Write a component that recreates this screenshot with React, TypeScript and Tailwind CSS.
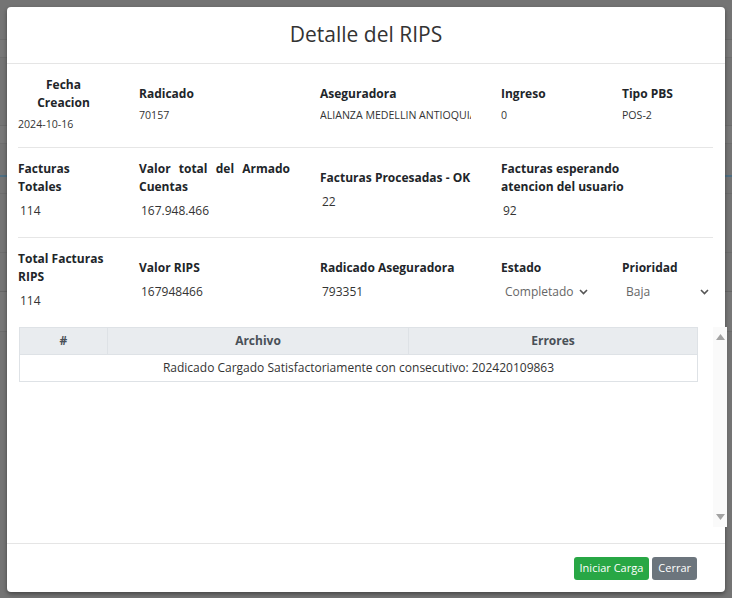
import React from "react"

const Chevron = () => (
  <svg width="9" height="6" viewBox="0 0 9 6" className="shrink-0">
    <polyline points="1,1 4.5,4.5 8,1" fill="none" stroke="#555" strokeWidth="1.6" />
  </svg>
)

const Field = ({ label, value, small, center, clip }: { label: string; value: string; small?: boolean; center?: boolean; clip?: boolean }) => (
  <div className="flex flex-col">
    <div className={`text-[12px] font-bold leading-[18px] text-[#212529] ${center ? "text-center" : ""}`}>{label}</div>
    {small ? (
      <div className={`mt-[4px] text-[10.6px] leading-[16px] text-[#333] ${clip ? "overflow-hidden whitespace-nowrap" : ""}`}>{value}</div>
    ) : (
      <div className="mt-[6px] pl-[2px] text-[12px] leading-[18px] text-[#333]">{value}</div>
    )}
  </div>
)

const SelectBox = ({ label, value }: { label: string; value: string }) => (
  <div className="flex flex-col">
    <div className="text-[12px] font-bold leading-[18px] text-[#212529]">{label}</div>
    <div className="mt-[6px] flex h-[18px] items-center justify-between px-[4px] text-[12px] leading-[18px] text-[#666]">
      <span>{value}</span>
      <Chevron />
    </div>
  </div>
)

export default function App() {
  return (
    <div className="relative h-[598px] w-[732px] overflow-hidden bg-[#747474]" style={{ fontFamily: '"Open Sans", "Liberation Sans", sans-serif' }}>
      {/* page beneath the backdrop */}
      <div className="flex flex-col">
        <div className="h-[40px] border-b border-[#6c6c6c]" />
        <div className="h-[18px] bg-[#787878] border-b border-[#6e6e6e]" />
        <div className="h-[68px] border-b border-[#6c6c6c]" />
        <div className="h-[18px] bg-[#787878] border-b border-[#6e6e6e]" />
        <div className="h-[33px] border-b-2 border-[#4f6f82]" />
        <div className="h-[17px] border-b border-[#6c6c6c]" />
        <div className="h-[59px] border-b border-[#6c6c6c]" />
        <div className="h-[39px] border-b border-[#666]" />
        <div className="h-[40px] bg-[#777] border-b border-[#6c6c6c]" />
      </div>

      {/* modal */}
      <div className="absolute left-[7px] top-[7px] flex h-[585px] w-[718px] flex-col rounded-[4px] bg-white shadow-[0_2px_4px_rgba(0,0,0,0.4)]">
        <div className="flex h-[57px] shrink-0 items-center justify-center border-b border-[#e5e5e5] pb-[1px]">
          <h1 className="text-[21px] font-normal leading-none text-[#333]">Detalle del RIPS</h1>
        </div>

        <div className="flex-1 pl-[11px]">
          <div className="grid w-[695px] grid-cols-[91px_151px_151px_91px_91px] items-center gap-x-[30px] border-b border-[#e6e6e6] pb-[15px] pt-[12px]">
            <div className="flex flex-col">
              <div className="w-[91px] text-center text-[12px] font-bold leading-[18px] text-[#212529]">
                Fecha
                <br />
                Creacion
              </div>
              <div className="mt-[4px] text-[10.6px] leading-[16px] text-[#333]">2024-10-16</div>
            </div>
            <Field label="Radicado" value="70157" small />
            <Field label="Aseguradora" value="ALIANZA MEDELLIN ANTIOQUIA" small clip />
            <Field label="Ingreso" value="0" small />
            <Field label="Tipo PBS" value="POS-2" small />
          </div>

          <div className="grid w-[695px] grid-cols-[91px_151px_151px_91px_91px] items-center gap-x-[30px] border-b border-[#e6e6e6] pb-[17px] pt-[12px]">
            <Field label="Facturas Totales" value="114" />
            <div className="flex flex-col">
              <div className="text-justify text-[12px] font-bold leading-[18px] text-[#212529]">Valor total del Armado Cuentas</div>
              <div className="mt-[6px] pl-[2px] text-[12px] leading-[18px] text-[#333]">167.948.466</div>
            </div>
            <Field label="Facturas Procesadas - OK" value="22" />
            <div className="col-span-2 flex flex-col">
              <div className="w-[130px] text-[12px] font-bold leading-[18px] text-[#212529]">Facturas esperando atencion del usuario</div>
              <div className="mt-[6px] pl-[2px] text-[12px] leading-[18px] text-[#333]">92</div>
            </div>
          </div>

          <div className="grid w-[695px] grid-cols-[91px_151px_151px_91px_91px] items-center gap-x-[30px] pt-[12px]">
            <Field label="Total Facturas RIPS" value="114" />
            <Field label="Valor RIPS" value="167948466" />
            <Field label="Radicado Aseguradora" value="793351" />
            <SelectBox label="Estado" value="Completado" />
            <SelectBox label="Prioridad" value="Baja" />
          </div>

          <table className="ml-[1px] mt-[17px] w-[679px] border-collapse text-[12px] text-[#333]">
            <thead>
              <tr className="h-[27px] bg-[#e9ecef] text-[#495057]">
                <th className="w-[88px] border border-[#dee2e6] font-bold">#</th>
                <th className="w-[301px] border border-[#dee2e6] font-bold">Archivo</th>
                <th className="border border-[#dee2e6] font-bold">Errores</th>
              </tr>
            </thead>
            <tbody>
              <tr className="h-[27px]">
                <td colSpan={3} className="border border-[#dee2e6] text-center">
                  Radicado Cargado Satisfactoriamente con consecutivo: 202420109863
                </td>
              </tr>
            </tbody>
          </table>
        </div>

        <div className="flex h-[49px] shrink-0 items-center justify-end gap-[3px] border-t border-[#e5e5e5] pr-[28px]">
          <button className="h-[23px] rounded-[3px] bg-[#28a745] px-[6px] text-[11px] text-white">Iniciar Carga</button>
          <button className="h-[23px] rounded-[3px] bg-[#6c757d] px-[6px] text-[11px] text-white">Cerrar</button>
        </div>
      </div>

      {/* scrollbar of the results area */}
      <div className="absolute left-[713px] top-[327px] flex h-[200px] w-[14px] flex-col items-center justify-between bg-[#fafafa] py-[7px]">
        <svg width="9" height="6" viewBox="0 0 9 6">
          <polygon points="0,6 4.5,0 9,6" fill="#a3a3a3" />
        </svg>
        <svg width="9" height="6" viewBox="0 0 9 6">
          <polygon points="0,0 9,0 4.5,6" fill="#a3a3a3" />
        </svg>
      </div>
    </div>
  )
}
